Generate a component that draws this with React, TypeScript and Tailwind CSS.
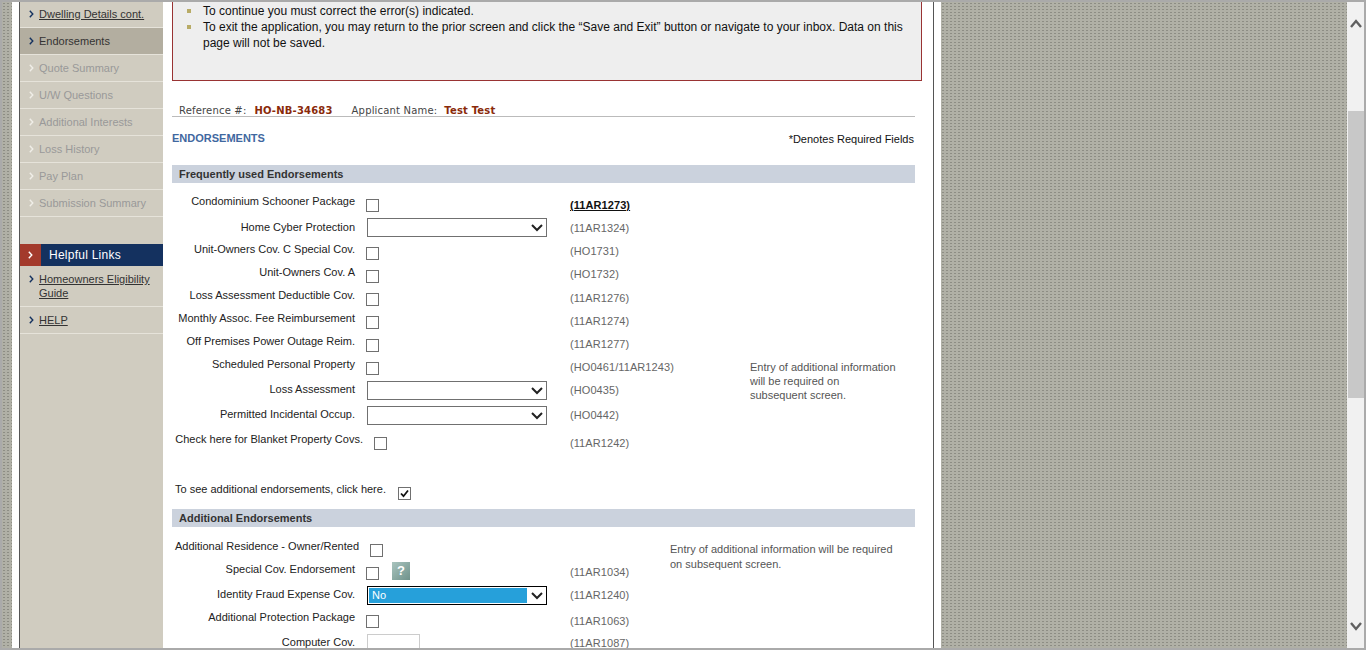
const dots = "bg-[#b0b0a6] bg-[radial-gradient(#8d8d84_0.8px,transparent_1.1px)] bg-[size:4px_3px]";

function Chevron({ className }: { className: string }) {
  return (
    <svg className={className} width="5" height="8" viewBox="0 0 5 8" fill="none" stroke="currentColor" strokeWidth="1.4">
      <path d="M0.8 0.8L3.8 4L0.8 7.2" />
    </svg>
  );
}

function NavItem({ label, state }: { label: string; state: "link" | "active" | "off" }) {
  const text = state === "link" ? "text-[#333] underline" : state === "active" ? "text-[#333]" : "text-[#999]";
  const bg = state === "active" ? "bg-[#b3aea0]" : "";
  const icon = state === "off" ? "text-[#f0eee8]" : "text-[#14315f]";
  return (
    <div className={`flex h-[27px] items-center border-b border-[#e6e3da] pl-[9px] ${bg}`}>
      <Chevron className={`mr-[5px] ${icon}`} />
      <span className={text}>{label}</span>
    </div>
  );
}

function Checkbox({ checked }: { checked?: boolean }) {
  return (
    <div className="flex h-[13px] w-[13px] items-center justify-center border border-[#707070] bg-white">
      {checked && (
        <svg width="9" height="9" viewBox="0 0 9 9" fill="none" stroke="#111" strokeWidth="1.8">
          <path d="M1 4.5L3.5 7.2L8 1.5" />
        </svg>
      )}
    </div>
  );
}

function Select({ value }: { value?: string }) {
  return (
    <div className={`ml-px flex h-[19px] w-[180px] items-center border ${value ? "border-black" : "border-[#707070]"} bg-white p-px`}>
      <div className={`h-full flex-1 pl-[3px] leading-[15px] ${value ? "bg-[#26a0da] text-white" : ""}`}>{value}</div>
      <svg className="ml-[4px] mr-[2px]" width="12" height="8" viewBox="0 0 12 8" fill="none" stroke="#222" strokeWidth="2">
        <path d="M1 1L6 6L11 1" />
      </svg>
    </div>
  );
}

type RowProps = {
  label: string;
  top: string;
  labelBox?: string;
  labelTop?: string;
  controlBox?: string;
  control: React.ReactNode;
  code?: string;
  codeTop?: string;
  codeClass?: string;
  note?: React.ReactNode;
  noteBox?: string;
};

function Row({ label, top, labelBox = "w-[183px]", labelTop = "mt-0", controlBox = "ml-[11px] w-[204px] mt-[5px]", control, code, codeTop = "mt-[4px]", codeClass = "text-[#666]", note, noteBox }: RowProps) {
  return (
    <div className={`flex ${top}`}>
      <div className={`${labelBox} ${labelTop} shrink-0 whitespace-nowrap text-right leading-[14px] text-[#222]`}>{label}</div>
      <div className={`${controlBox} shrink-0`}>{control}</div>
      {code && <div className={`${codeTop} w-[180px] shrink-0 leading-[14px] tracking-[0.08px] ${codeClass}`}>{code}</div>}
      {note && <div className={noteBox}>{note}</div>}
    </div>
  );
}

function SectionBar({ children }: { children: string }) {
  return <div className="h-[18px] w-[743px] bg-[#cbd2dd] pl-[7px] font-bold leading-[18px] text-[#333]">{children}</div>;
}

const selectBox = "ml-[11px] w-[204px] mt-0";
const noteText = "leading-[14px] text-[#555]";

export default function App() {
  return (
    <div className="flex h-[650px] overflow-hidden border-2 border-[#aaa] bg-white font-['Liberation_Sans',Arial,sans-serif] text-[11px]">
      <div className={`w-[10px] shrink-0 ${dots}`} />
      <div className="w-[7px] shrink-0 bg-white" />

      {/* Sidebar */}
      <aside className="w-[144px] shrink-0 border-l border-[#555] bg-[#d0ccc0]">
        <div className="-mt-px">
          <NavItem label="Dwelling Details cont." state="link" />
          <NavItem label="Endorsements" state="active" />
          <NavItem label="Quote Summary" state="off" />
          <NavItem label="U/W Questions" state="off" />
          <NavItem label="Additional Interests" state="off" />
          <NavItem label="Loss History" state="off" />
          <NavItem label="Pay Plan" state="off" />
          <NavItem label="Submission Summary" state="off" />
        </div>
        <div className="mt-[27px] flex h-[22px] bg-[#14315f]">
          <div className="flex w-[21px] items-center justify-center bg-[#a33a2c]">
            <Chevron className="text-white" />
          </div>
          <div className="pl-[8px] text-[12px] font-normal leading-[22px] tracking-[0.25px] text-white">Helpful Links</div>
        </div>
        <div className="flex h-[41px] border-b border-[#e6e3da] pl-[9px] pt-[6px]">
          <Chevron className="mr-[5px] mt-[3px] text-[#14315f]" />
          <span className="leading-[14px] text-[#333] underline">
            Homeowners Eligibility
            <br />
            Guide
          </span>
        </div>
        <div className="flex h-[27px] items-center border-b border-[#e6e3da] pl-[9px]">
          <Chevron className="mr-[5px] text-[#14315f]" />
          <span className="text-[#333] underline">HELP</span>
        </div>
      </aside>

      {/* Main form */}
      <main className="w-[771px] shrink-0 border-r border-[#555] pl-[9px]">
        <div className="h-[79px] w-[750px] border-x border-b border-[#993333] bg-[#eee] pl-[14px] text-[12px] leading-[16px] text-[#111]">
          <div className="flex pt-px">
            <div className="mr-[12px] mt-[6px] h-[4px] w-[4px] shrink-0 bg-[#b8ab66]" />
            <div>To continue you must correct the error(s) indicated.</div>
          </div>
          <div className="flex">
            <div className="mr-[12px] mt-[6px] h-[4px] w-[4px] shrink-0 bg-[#b8ab66]" />
            <div className="w-[710px]">To exit the application, you may return to the prior screen and click the “Save and Exit” button or navigate to your inbox. Data on this page will not be saved.</div>
          </div>
        </div>

        <div className="mt-[22px] h-[14px] w-[743px] border-b border-[#bbb] pl-[7px] font-['DejaVu_Sans',Verdana,sans-serif] text-[10px] leading-[15px] tracking-[0.18px] text-[#444]">
          Reference #:<span className="ml-[8px] font-bold text-[#8a2a0a]">HO-NB-34683</span>
          <span className="ml-[19px]">Applicant Name:</span>
          <span className="ml-[7px] font-bold text-[#8a2a0a]">Test Test</span>
        </div>

        <div className="mt-[14px] flex h-[14px] w-[742px] justify-between leading-[14px]">
          <span className="font-bold text-[#3f68a0]">ENDORSEMENTS</span>
          <span className="mt-px text-[#111]">*Denotes Required Fields</span>
        </div>

        <div className="mt-[20px]">
          <SectionBar>Frequently used Endorsements</SectionBar>
        </div>

        <div className="mt-[11px]">
          <Row top="h-[24px]" label="Condominium Schooner Package" control={<Checkbox />} code="(11AR1273)" codeClass="font-bold text-[#111] underline" />
          <Row top="h-[24px]" label="Home Cyber Protection" labelTop="mt-[2px]" controlBox={selectBox} control={<Select />} code="(11AR1324)" codeTop="mt-[3px]" />
          <Row top="h-[23px]" label="Unit-Owners Cov. C Special Cov." control={<Checkbox />} code="(HO1731)" codeTop="mt-[2px]" />
          <Row top="h-[23px]" label="Unit-Owners Cov. A" control={<Checkbox />} code="(HO1732)" codeTop="mt-[2px]" />
          <Row top="h-[23px]" label="Loss Assessment Deductible Cov." control={<Checkbox />} code="(11AR1276)" codeTop="mt-[3px]" />
          <Row top="h-[23px]" label="Monthly Assoc. Fee Reimbursement" control={<Checkbox />} code="(11AR1274)" codeTop="mt-[3px]" />
          <Row top="h-[23px]" label="Off Premises Power Outage Reim." control={<Checkbox />} code="(11AR1277)" codeTop="mt-[3px]" />
          <Row
            top="h-[24px]"
            label="Scheduled Personal Property"
            control={<Checkbox />}
            code="(HO0461/11AR1243)"
            codeTop="mt-[3px]"
            noteBox={`mt-[3px] ${noteText}`}
            note={
              <>
                Entry of additional information
                <br />
                will be required on
                <br />
                subsequent screen.
              </>
            }
          />
          <Row top="h-[25px]" label="Loss Assessment" labelTop="mt-px" controlBox={selectBox} control={<Select />} code="(HO0435)" codeTop="mt-[2px]" />
          <Row top="h-[26px]" label="Permitted Incidental Occup." labelTop="mt-px" controlBox={selectBox} control={<Select />} code="(HO0442)" codeTop="mt-[2px]" />
          <Row top="h-[50px]" label="Check here for Blanket Property Covs." labelBox="w-[191px]" controlBox="ml-[11px] w-[196px] mt-[5px]" control={<Checkbox />} code="(11AR1242)" />
          <div className="flex h-[27px] pl-[3px]">
            <div className="leading-[14px] text-[#222]">To see additional endorsements, click here.</div>
            <div className="ml-[12px] mt-[5px]">
              <Checkbox checked />
            </div>
          </div>
        </div>

        <SectionBar>Additional Endorsements</SectionBar>

        <div className="mt-[12px]">
          <Row
            top="h-[23px]"
            label="Additional Residence - Owner/Rented"
            labelBox="w-[187px]"
            controlBox="ml-[11px] w-[300px] mt-[5px]"
            control={<Checkbox />}
            noteBox="mt-[3px] leading-[15px] text-[#555]"
            note={
              <>
                Entry of additional information will be required
                <br />
                on subsequent screen.
              </>
            }
          />
          <Row
            top="h-[24px]"
            label="Special Cov. Endorsement"
            control={
              <div className="flex items-start">
                <Checkbox />
                <div className="-mt-[5px] ml-[13px] flex h-[18px] w-[18px] items-center justify-center bg-gradient-to-br from-[#a9c4be] to-[#6f928b] text-[13px] font-bold text-white">?</div>
              </div>
            }
            code="(11AR1034)"
            codeTop="mt-[3px]"
          />
          <Row top="h-[24px]" label="Identity Fraud Expense Cov." labelTop="mt-px" controlBox={selectBox} control={<Select value="No" />} code="(11AR1240)" codeTop="mt-[2px]" />
          <Row top="h-[25px]" label="Additional Protection Package" control={<Checkbox />} code="(11AR1063)" />
          <Row
            top="h-[25px]"
            label="Computer Cov."
            controlBox="ml-[11px] w-[204px] -mt-px"
            control={<div className="ml-px h-[24px] w-[53px] border border-[#ccc] bg-white" />}
            code="(11AR1087)"
            codeTop="mt-px"
          />
        </div>
      </main>

      <div className="w-[7px] shrink-0 bg-white" />
      <div className={`flex-1 ${dots}`} />

      {/* Scrollbar */}
      <div className="flex w-[17px] shrink-0 flex-col items-center bg-[#f1f1f1]">
        <svg className="mt-[17px]" width="12" height="9" viewBox="0 0 12 9" fill="none" stroke="#606060" strokeWidth="2.4">
          <path d="M1 8L6 2L11 8" />
        </svg>
        <div className="ml-px mt-[83px] h-[287px] w-[16px] bg-[#c8c8c8]" />
        <svg className="mt-[224px]" width="12" height="9" viewBox="0 0 12 9" fill="none" stroke="#606060" strokeWidth="2.4">
          <path d="M1 1L6 7L11 1" />
        </svg>
      </div>
    </div>
  );
}
